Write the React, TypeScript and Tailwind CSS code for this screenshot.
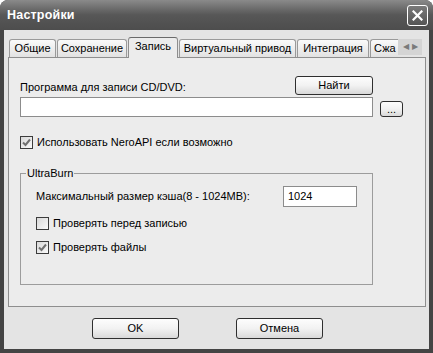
import React from "react";

const font = { fontFamily: '"Liberation Sans", Arial, sans-serif' };

function Check({ checked }: { checked?: boolean }) {
  return (
    <span className="w-[13px] h-[13px] border border-[#3c3c3c] bg-gradient-to-br from-[#d8d8d8] to-[#fafafa] flex items-center justify-center shrink-0">
      {checked && (
        <svg width="9" height="9" viewBox="0 0 9 9">
          <path d="M1 4.5 L3.5 7 L8 1.5" fill="none" stroke="#707070" strokeWidth="2" />
        </svg>
      )}
    </span>
  );
}

function XpButton({ children, className = "" }: { children: React.ReactNode; className?: string }) {
  return (
    <div className={`border border-[#2f2f2f] rounded-[3px] bg-gradient-to-b from-[#fdfdfd] via-[#f2f2f2] to-[#d9d9d9] flex items-center justify-center text-[11px] text-black ${className}`}>
      {children}
    </div>
  );
}

function Tab({ label, w, active }: { label: string; w: number; active?: boolean }) {
  if (active) {
    return (
      <div
        className="relative z-10 -mb-px h-[21px] border border-b-0 border-[#8e8e8e] border-t-[#6a6a6a] rounded-t-[3px] bg-[#ececec] flex items-center justify-center text-[11px] text-black"
        style={{ width: w }}
      >
        <span className="-mt-[3px]">{label}</span>
      </div>
    );
  }
  return (
    <div
      className="h-[18px] border border-b-0 border-[#9a9a9a] rounded-t-[3px] bg-gradient-to-b from-[#fafafa] to-[#e2e2e2] flex items-center justify-center text-[11px] text-black"
      style={{ width: w }}
    >
      {label}
    </div>
  );
}

export default function App() {
  return (
    <div className="w-[433px] h-[353px] bg-[#444] rounded-t-[8px] flex flex-col overflow-hidden" style={font}>
      {/* title bar */}
      <div className="h-[30px] shrink-0 bg-gradient-to-b from-[#8a8a8a] via-[#575757] to-[#4d4d4d] flex items-center pl-[7px] pr-[5px]">
        <span className="text-white font-bold text-[12.5px] tracking-[0.2px]">Настройки</span>
        <div className="ml-auto w-[21px] h-[21px] rounded-[3px] border border-white bg-gradient-to-b from-[#7a7a7a] to-[#555] flex items-center justify-center">
          <svg width="11" height="11" viewBox="0 0 11 11">
            <path d="M1.5 1.5 L9.5 9.5 M9.5 1.5 L1.5 9.5" stroke="white" strokeWidth="2.2" strokeLinecap="square" />
          </svg>
        </div>
      </div>

      {/* body */}
      <div className="flex-1 mx-[4px] mb-[4px] bg-[#e4e4e4] flex flex-col pt-[6px]">
        {/* tab strip */}
        <div className="flex items-end h-[21px] pl-[5px] gap-[1px]">
          <Tab label="Общие" w={47} />
          <Tab label="Сохранение" w={70} />
          <Tab label="Запись" w={50} active />
          <Tab label="Виртуальный привод" w={117} />
          <Tab label="Интеграция" w={72} />
          <div className="h-[18px] w-[28px] border border-b-0 border-r-0 border-[#9a9a9a] rounded-tl-[3px] bg-gradient-to-b from-[#fafafa] to-[#e2e2e2] text-[11px] text-black flex items-center pl-[3px] overflow-hidden whitespace-nowrap">
            Сжа
          </div>
          <div className="self-start mt-[3px] -ml-[1px] h-[16px] w-[24px] bg-[#d4d4d4] flex items-center justify-around px-[3px] text-[#7a7a7a] text-[8px]">
            <span>◀</span>
            <span>▶</span>
          </div>
        </div>

        {/* panel */}
        <div className="ml-[4px] w-[418px] h-[250px] border border-[#8e8e8e] bg-[#ececec] flex flex-col pl-[11px] pt-[18px] text-[11px] text-black">
          <div className="flex items-end w-[353px] h-[19px]">
            <span className="leading-[13px] mb-[1px]">Программа для записи CD/DVD:</span>
            <XpButton className="ml-auto w-[78px] h-[19px]">Найти</XpButton>
          </div>
          <div className="flex items-end mt-[2px] h-[20px]">
            <div className="w-[353px] h-[20px] border border-[#8c8c8c] bg-white" />
            <XpButton className="ml-[7px] w-[23px] h-[16px] text-[10px] leading-[10px]">...</XpButton>
          </div>

          <div className="flex items-center gap-[4px] mt-[19px] h-[13px] leading-[13px]">
            <Check checked />
            <span>Использовать NeroAPI если возможно</span>
          </div>

          <fieldset className="mt-[17px] w-[353px] border border-[#9c9c9c] pb-[30px]">
            <legend className="ml-[5px] px-[1px] leading-[14px]">UltraBurn</legend>
            <div className="flex items-center pl-[15px] pr-[15px] mt-[6px] h-[21px]">
              <span>Максимальный размер кэша(8 - 1024MB):</span>
              <div className="ml-auto w-[74px] h-[21px] border border-[#8c8c8c] bg-white flex items-center pl-[4px]">1024</div>
            </div>
            <div className="flex items-center gap-[4px] pl-[15px] mt-[10px] h-[13px] leading-[13px]">
              <Check />
              <span>Проверять перед записью</span>
            </div>
            <div className="flex items-center gap-[4px] pl-[15px] mt-[11px] h-[13px] leading-[13px]">
              <Check checked />
              <span>Проверять файлы</span>
            </div>
          </fieldset>
        </div>

        {/* buttons */}
        <div className="flex mt-[11px] pl-[88px] gap-[57px]">
          <XpButton className="w-[87px] h-[21px]">OK</XpButton>
          <XpButton className="w-[87px] h-[21px]">Отмена</XpButton>
        </div>
      </div>
    </div>
  );
}
